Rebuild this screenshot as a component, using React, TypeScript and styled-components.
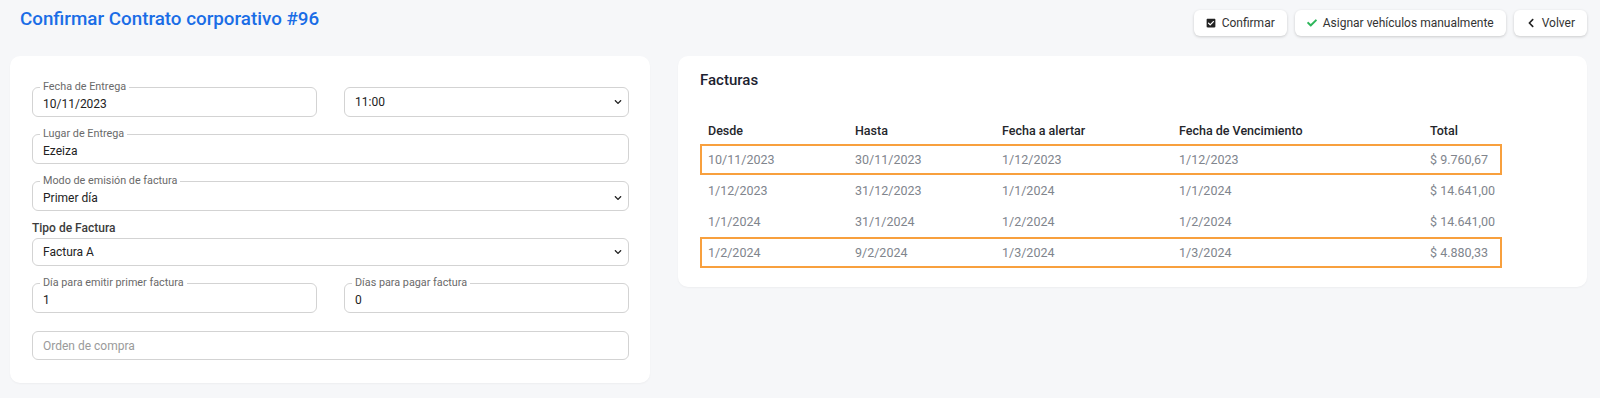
import React from 'react';
import styled, { createGlobalStyle } from 'styled-components';
import { FaCheckSquare, FaCheck, FaChevronLeft, FaChevronDown } from 'react-icons/fa';

const GlobalStyle = createGlobalStyle`
  html, body { margin: 0; padding: 0; background: #f6f7f9; }
  body { font-family: Roboto, "Liberation Sans", Arial, sans-serif; color: #212529; }
  * { box-sizing: border-box; }
`;

const Page = styled.div`
  width: 1600px;
  height: 398px;
  background: #f6f7f9;
  overflow: hidden;
`;

const Header = styled.header`
  display: flex;
  justify-content: space-between;
  align-items: flex-start;
  height: 56px;
  padding: 8px 13px 0 20px;
`;

const Title = styled.h1`
  margin: 0;
  font-size: 18.8px;
  line-height: 22px;
  font-weight: 500;
  color: #1a6de6;
`;

const Actions = styled.div`
  display: flex;
  gap: 8px;
  margin-top: 2px;
`;

const Button = styled.button`
  display: inline-flex;
  align-items: center;
  gap: 6px;
  height: 26px;
  padding: 0 12px;
  border: none;
  border-radius: 6px;
  background: #fff;
  box-shadow: 0 1px 3px rgba(0, 0, 0, 0.18);
  font-family: inherit;
  font-size: 12px;
  color: #333;
  cursor: pointer;
`;

const Content = styled.div`
  display: grid;
  grid-template-columns: 640px 909px;
  column-gap: 28px;
  padding-left: 10px;
  align-items: start;
`;

const Card = styled.section`
  background: #fff;
  border-radius: 10px;
  box-shadow: 0 1px 2px rgba(0, 0, 0, 0.04);
`;

const FormCard = styled(Card)`
  padding: 25px 21px 23px 22px;
  display: flex;
  flex-direction: column;
  gap: 11px;
`;

const TwoCols = styled.div`
  display: grid;
  grid-template-columns: 1fr 1fr;
  column-gap: 27px;
  align-items: end;
`;

const Outlined = styled.fieldset`
  margin: 0;
  padding: 0 10px 1px;
  border: 1px solid #d3d3d3;
  border-radius: 6px;
  min-width: 0;
`;

const Legend = styled.legend`
  font-size: 10.8px;
  line-height: 12px;
  color: #6a6a6a;
  padding: 0 3px;
  margin-left: -3px;
`;

const Value = styled.div<{ $select?: boolean }>`
  display: flex;
  align-items: center;
  justify-content: space-between;
  margin-right: ${(p) => (p.$select ? -4 : 0)}px;
  font-size: 12px;
  line-height: 22px;
  color: #222;
`;

const Box = styled.div<{ $h?: number; $placeholder?: boolean; $spaced?: boolean }>`
  display: flex;
  align-items: center;
  justify-content: space-between;
  height: ${(p) => p.$h ?? 30}px;
  padding: 0 6px 0 10px;
  border: 1px solid #d3d3d3;
  border-radius: 6px;
  font-size: 12px;
  color: ${(p) => (p.$placeholder ? '#9a9a9a' : '#222')};
  margin-top: ${(p) => (p.$spaced ? 7 : 0)}px;
  background: #fff;
`;

const Group = styled.div`
  display: flex;
  flex-direction: column;
  gap: 4px;
`;

const GroupLabel = styled.label`
  font-size: 12px;
  line-height: 12px;
  font-weight: 500;
  color: #3c3c3c;
`;

const Arrow = styled(FaChevronDown)`
  color: #222;
  width: 8px;
  height: 8px;
`;

const TableCard = styled(Card)`
  padding: 15px 22px 19px 22px;
`;

const CardTitle = styled.h2`
  margin: 0 0 27px;
  font-size: 15px;
  line-height: 18px;
  font-weight: 500;
  color: #1d2230;
`;

const Table = styled.div`
  width: 802px;
  display: flex;
  flex-direction: column;
`;

const Row = styled.div<{ $head?: boolean; $mark?: boolean }>`
  display: grid;
  grid-template-columns: 147px 147px 177px 251px 1fr;
  align-items: center;
  height: ${(p) => (p.$head ? 28 : 31)}px;
  padding-left: 6px;
  border: 2px solid ${(p) => (p.$mark ? '#f8a03e' : 'transparent')};
  font-size: 12.5px;
  font-weight: ${(p) => (p.$head ? 500 : 400)};
  color: ${(p) => (p.$head ? '#24262b' : '#80858d')};
`;

const Cell = styled.span`
  white-space: nowrap;
`;

const facturas = [
  { desde: '10/11/2023', hasta: '30/11/2023', alerta: '1/12/2023', venc: '1/12/2023', total: '$ 9.760,67', mark: true },
  { desde: '1/12/2023', hasta: '31/12/2023', alerta: '1/1/2024', venc: '1/1/2024', total: '$ 14.641,00', mark: false },
  { desde: '1/1/2024', hasta: '31/1/2024', alerta: '1/2/2024', venc: '1/2/2024', total: '$ 14.641,00', mark: false },
  { desde: '1/2/2024', hasta: '9/2/2024', alerta: '1/3/2024', venc: '1/3/2024', total: '$ 4.880,33', mark: true },
];

export default function App() {
  return (
    <Page>
      <GlobalStyle />
      <Header>
        <Title>Confirmar Contrato corporativo #96</Title>
        <Actions>
          <Button>
            <FaCheckSquare size={10} color="#222" />
            Confirmar
          </Button>
          <Button>
            <FaCheck size={10} color="#2db65a" />
            Asignar vehículos manualmente
          </Button>
          <Button>
            <FaChevronLeft size={10} color="#222" />
            Volver
          </Button>
        </Actions>
      </Header>
      <Content>
        <FormCard>
          <TwoCols>
            <Outlined>
              <Legend>Fecha de Entrega</Legend>
              <Value>10/11/2023</Value>
            </Outlined>
            <Box>
              <span>11:00</span>
              <Arrow />
            </Box>
          </TwoCols>
          <Outlined>
            <Legend>Lugar de Entrega</Legend>
            <Value>Ezeiza</Value>
          </Outlined>
          <Outlined>
            <Legend>Modo de emisión de factura</Legend>
            <Value $select>
              <span>Primer día</span>
              <Arrow />
            </Value>
          </Outlined>
          <Group>
            <GroupLabel>Tipo de Factura</GroupLabel>
            <Box $h={28}>
              <span>Factura A</span>
              <Arrow />
            </Box>
          </Group>
          <TwoCols>
            <Outlined>
              <Legend>Día para emitir primer factura</Legend>
              <Value>1</Value>
            </Outlined>
            <Outlined>
              <Legend>Días para pagar factura</Legend>
              <Value>0</Value>
            </Outlined>
          </TwoCols>
          <Box $h={29} $placeholder $spaced>
            <span>Orden de compra</span>
          </Box>
        </FormCard>
        <TableCard>
          <CardTitle>Facturas</CardTitle>
          <Table>
            <Row $head>
              <Cell>Desde</Cell>
              <Cell>Hasta</Cell>
              <Cell>Fecha a alertar</Cell>
              <Cell>Fecha de Vencimiento</Cell>
              <Cell>Total</Cell>
            </Row>
            {facturas.map((f, i) => (
              <Row key={i} $mark={f.mark}>
                <Cell>{f.desde}</Cell>
                <Cell>{f.hasta}</Cell>
                <Cell>{f.alerta}</Cell>
                <Cell>{f.venc}</Cell>
                <Cell>{f.total}</Cell>
              </Row>
            ))}
          </Table>
        </TableCard>
      </Content>
    </Page>
  );
}
